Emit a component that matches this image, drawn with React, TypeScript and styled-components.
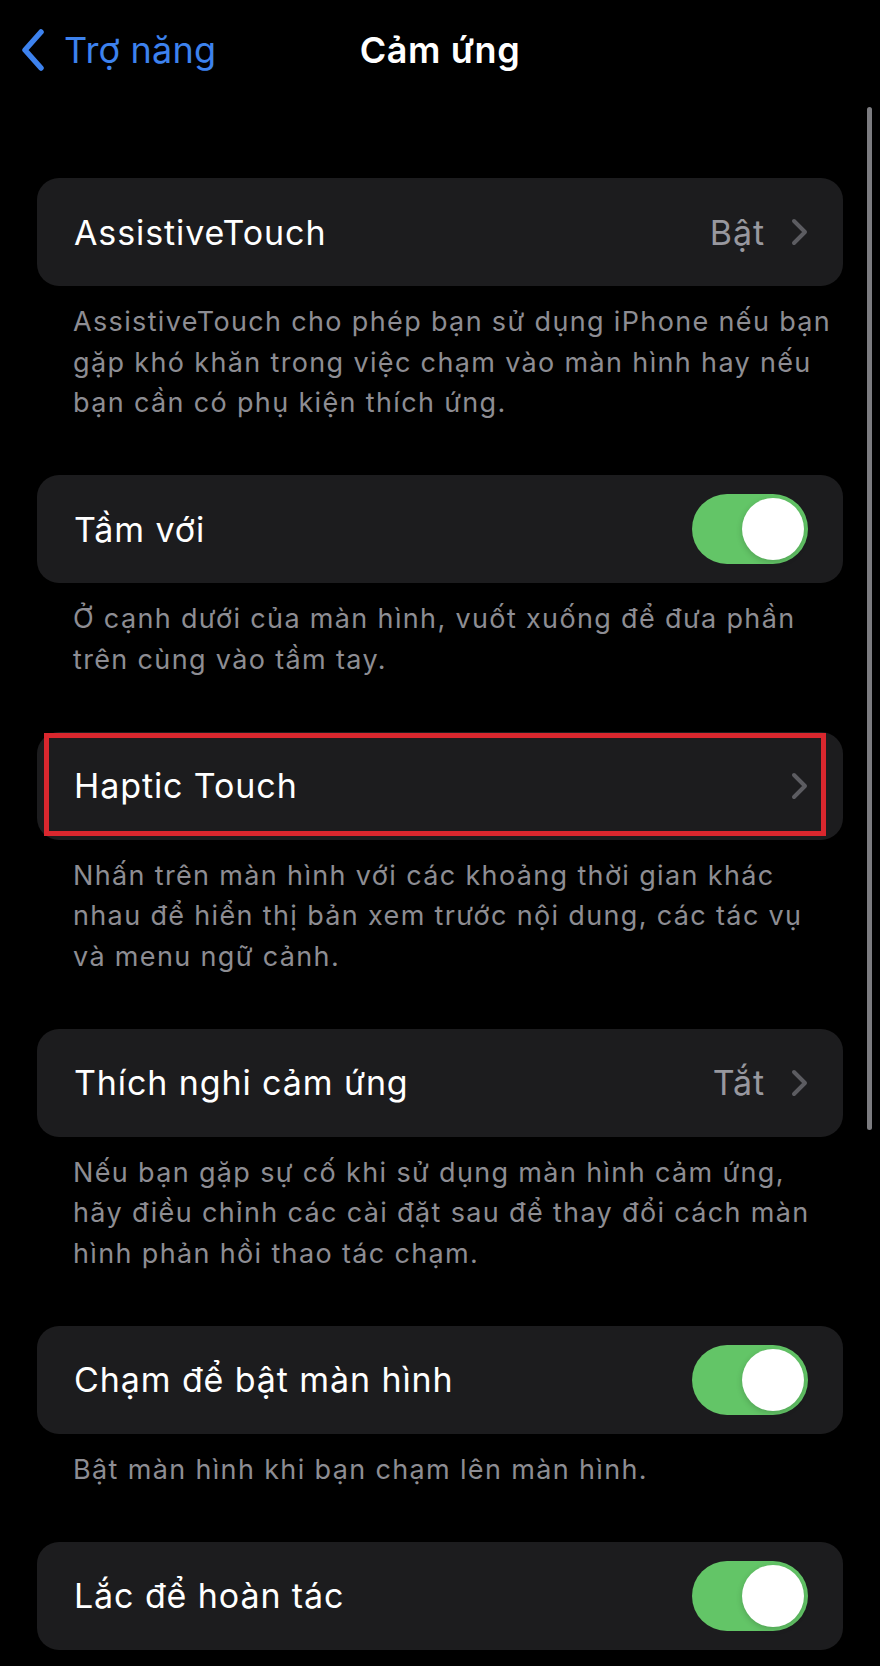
import styled, { createGlobalStyle } from 'styled-components';

const GlobalStyle = createGlobalStyle`
  html, body {
    margin: 0;
    padding: 0;
    background: #000;
  }
  body {
    font-family: Inter, "Noto Sans", "Liberation Sans", sans-serif;
    -webkit-font-smoothing: antialiased;
  }
`

const Screen = styled.div`
  position: relative;
  width: 880px;
  height: 1666px;
  overflow: hidden;
  background: #000;
  color: #fff;
`

const NavBar = styled.header`
  height: 100px;
  display: grid;
  grid-template-columns: 1fr auto 1fr;
  align-items: center;
`

const BackButton = styled.div`
  display: flex;
  align-items: center;
  gap: 19px;
  padding-left: 21px;
  color: #3d82ee;
  font-size: 36px;
  letter-spacing: 0.2px;
`

const NavTitle = styled.h1`
  margin: 0;
  font-size: 36px;
  font-weight: 600;
  letter-spacing: 0.6px;
`

const ScrollIndicator = styled.div`
  position: absolute;
  top: 107px;
  right: 8px;
  width: 5px;
  height: 1023px;
  border-radius: 3px;
  background: #7c7c80;
`

const Content = styled.main`
  padding: 78px 37px 0;
`

const Card = styled.div`
  position: relative;
  height: 108px;
  box-sizing: border-box;
  display: flex;
  align-items: center;
  padding: 0 35px 0 37px;
  background: #1c1c1e;
  border-radius: 22px;
`

const Label = styled.span`
  flex: 1;
  font-size: 34px;
  letter-spacing: 0.9px;
`

const Value = styled.span`
  margin-right: 26px;
  font-size: 34px;
  color: #98989f;
  letter-spacing: 0.9px;
`

const Footer = styled.p`
  margin: 0;
  padding: 16px 30px 51.5px 36px;
  font-size: 27px;
  line-height: 40.5px;
  color: #8d8d93;
  letter-spacing: 1.35px;
  white-space: nowrap;
`

const Switch = styled.span<{ $on: boolean }>`
  position: relative;
  width: 116px;
  height: 70px;
  border-radius: 35px;
  background: ${p => (p.$on ? '#63c567' : '#39393d')};

  &::after {
    content: '';
    position: absolute;
    top: 4px;
    left: ${p => (p.$on ? '50px' : '4px')};
    width: 62px;
    height: 62px;
    border-radius: 50%;
    background: #fff;
    box-shadow: 0 2px 6px rgba(0, 0, 0, 0.18);
  }
`

// red outline drawn over a row to call it out
const Highlight = styled.div`
  position: absolute;
  top: 1px;
  left: 7px;
  right: 17px;
  bottom: 4px;
  border: 5px solid #d9272e;
  pointer-events: none;
`

const BackChevron = () => (
  <svg width="24" height="42" viewBox="0 0 24 42">
    <polyline points="20,3 4,21 20,39" fill="none" stroke="#3d82ee" strokeWidth="5.5" strokeLinecap="round" strokeLinejoin="round" />
  </svg>
)

const Chevron = () => (
  <svg width="17" height="28" viewBox="0 0 17 28">
    <polyline points="3,3 14,14 3,25" fill="none" stroke="#5c5c61" strokeWidth="4" strokeLinecap="round" strokeLinejoin="round" />
  </svg>
)

type Row = {
  label: string
  value?: string
  toggle?: boolean
  marked?: boolean
  footer?: string[]
}

const rows: Row[] = [
  {
    label: 'AssistiveTouch',
    value: 'Bật',
    footer: [
      'AssistiveTouch cho phép bạn sử dụng iPhone nếu bạn',
      'gặp khó khăn trong việc chạm vào màn hình hay nếu',
      'bạn cần có phụ kiện thích ứng.',
    ],
  },
  {
    label: 'Tầm với',
    toggle: true,
    footer: [
      'Ở cạnh dưới của màn hình, vuốt xuống để đưa phần',
      'trên cùng vào tầm tay.',
    ],
  },
  {
    label: 'Haptic Touch',
    marked: true,
    footer: [
      'Nhấn trên màn hình với các khoảng thời gian khác',
      'nhau để hiển thị bản xem trước nội dung, các tác vụ',
      'và menu ngữ cảnh.',
    ],
  },
  {
    label: 'Thích nghi cảm ứng',
    value: 'Tắt',
    footer: [
      'Nếu bạn gặp sự cố khi sử dụng màn hình cảm ứng,',
      'hãy điều chỉnh các cài đặt sau để thay đổi cách màn',
      'hình phản hồi thao tác chạm.',
    ],
  },
  {
    label: 'Chạm để bật màn hình',
    toggle: true,
    footer: ['Bật màn hình khi bạn chạm lên màn hình.'],
  },
  {
    label: 'Lắc để hoàn tác',
    toggle: true,
  },
]

export default function App() {
  return (
    <Screen>
      <GlobalStyle />
      <NavBar>
        <BackButton>
          <BackChevron />
          <span>Trợ năng</span>
        </BackButton>
        <NavTitle>Cảm ứng</NavTitle>
        <div />
      </NavBar>
      <Content>
        {rows.map(row => (
          <section key={row.label}>
            <Card>
              <Label>{row.label}</Label>
              {row.value && <Value>{row.value}</Value>}
              {row.toggle ? <Switch $on /> : <Chevron />}
              {row.marked && <Highlight />}
            </Card>
            {row.footer && (
              <Footer>
                {row.footer.map((line, i) => (
                  <span key={i}>
                    {line}
                    {i < row.footer!.length - 1 && <br />}
                  </span>
                ))}
              </Footer>
            )}
          </section>
        ))}
      </Content>
      <ScrollIndicator />
    </Screen>
  )
}
